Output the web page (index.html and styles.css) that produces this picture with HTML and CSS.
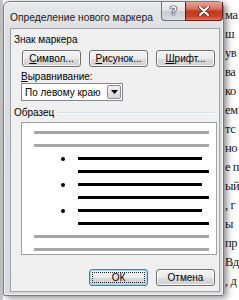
FILE: index.html
```html
<!DOCTYPE html>
<html lang="ru">
<head>
<meta charset="utf-8">
<link rel="stylesheet" href="styles.css">
</head>
<body>
<div class="doc">
  <div class="doc-line">ма</div>
  <div class="doc-line">ш</div>
  <div class="doc-line">ув</div>
  <div class="doc-line">ва</div>
  <div class="doc-line">ко</div>
  <div class="doc-line">ем</div>
  <div class="doc-line">тс</div>
  <div class="doc-line">но</div>
  <div class="doc-line">е п</div>
  <div class="doc-line">ый</div>
  <div class="doc-line">, г</div>
  <div class="doc-line">ы</div>
  <div class="doc-line">пр</div>
  <div class="doc-line">Вд</div>
  <div class="doc-line">, д</div>
</div>

<div class="window">
  <div class="titlebar">
    <span class="title">Определение нового маркера</span>
    <div class="caption-btns">
      <div class="cbtn help">?</div>
      <div class="cbtn close">
        <svg width="12" height="10" viewBox="0 0 12 10"><path d="M2 1 L10 9 M10 1 L2 9" stroke="#5a1a14" stroke-width="3.6" stroke-linecap="round"/><path d="M2 1 L10 9 M10 1 L2 9" stroke="#fff" stroke-width="2.2" stroke-linecap="round"/></svg>
      </div>
    </div>
  </div>
  <div class="client">
    <div class="group-title">Знак маркера</div>
    <div class="btn-row">
      <div class="btn"><u>С</u>имвол...</div>
      <div class="btn"><u>Р</u>исунок...</div>
      <div class="btn"><u>Ш</u>рифт...</div>
    </div>
    <div class="label"><u>В</u>ыравнивание:</div>
    <div class="combo">
      <span class="combo-text">По левому краю</span>
      <span class="combo-arrow"><svg width="7" height="4" viewBox="0 0 7 4"><path d="M0 0 H7 L3.5 4 Z" fill="#000"/></svg></span>
    </div>
    <div class="group-head"><span>Образец</span><span class="group-line"></span></div>
    <div class="preview">
      <div class="pline gray"></div>
      <div class="pline gray"></div>
      <div class="prow"><span class="dot"></span><span class="bl short"></span></div>
      <div class="prow"><span class="bl"></span></div>
      <div class="prow"><span class="dot"></span><span class="bl short"></span></div>
      <div class="prow"><span class="bl"></span></div>
      <div class="prow"><span class="dot"></span><span class="bl short"></span></div>
      <div class="prow"><span class="bl"></span></div>
      <div class="pline gray"></div>
      <div class="pline gray"></div>
    </div>
    <div class="footer">
      <div class="btn ok"><span class="focus">ОК</span></div>
      <div class="btn">Отмена</div>
    </div>
  </div>
</div>
</body>
</html>
```
FILE: styles.css
```css
* { box-sizing: border-box; }
html, body { margin: 0; padding: 0; }
body {
  width: 239px;
  height: 300px;
  overflow: hidden;
  background: #ffffff;
  position: relative;
  font-family: "Liberation Sans", "Noto Sans", sans-serif;
}
.doc {
  padding: 6px 0 0 225px;
  font-family: "Liberation Serif", serif;
  font-size: 12.5px;
  letter-spacing: -0.4px;
  line-height: 19px;
  color: #1a1a1a;
  background: linear-gradient(to right, #bfbfbf 0, #cfcfcf 3px, #fff 3px);
  height: 300px;
}
.doc-line { white-space: nowrap; }

.window {
  position: absolute;
  left: 3px;
  top: 1px;
  width: 221px;
  height: 295px;
  background: linear-gradient(to bottom, #e6e8ea 0, #dcdee1 30px, #d8dadd 100%);
  border: 1px solid #77797c;
  border-radius: 6px 6px 2px 2px;
  box-shadow: 3px 2px 6px rgba(0,0,0,0.45), inset 0 0 0 1px rgba(255,255,255,0.7);
  display: flex;
  flex-direction: column;
  padding: 0 3px 3px 6px;
}
.titlebar {
  height: 26px;
  flex-shrink: 0;
  display: flex;
  align-items: flex-start;
  justify-content: space-between;
}
.title {
  font-size: 10.3px;
  color: #1b1b1b;
  margin-top: 10px;
  white-space: nowrap;
}
.caption-btns {
  display: flex;
  flex-shrink: 0;
  height: 19px;
  margin-right: -3px;
}
.cbtn {
  height: 19px;
  display: flex;
  align-items: center;
  justify-content: center;
  border: 1px solid #6f7275;
  border-top: none;
}
.help {
  width: 24px;
  border-radius: 0 0 0 4px;
  background: linear-gradient(to bottom, #f1f3f5 0, #dfe2e6 50%, #c8ccd1 51%, #d9dce0 100%);
  color: #ffffff;
  font-weight: bold;
  font-size: 12px;
  line-height: 12px;
  text-shadow: 0 0 1px #222, 0 0 1px #222, 0 0 1px #222, 0 0 1px #222;
  border-right: none;
}
.close {
  width: 38px;
  border-radius: 0 0 4px 0;
  border-color: #5e2018;
  background: linear-gradient(to bottom, #e9a396 0, #d96d5b 40%, #c13a22 50%, #c7432b 80%, #db7661 100%);
}
.client {
  flex: 1;
  background: #f0f0f0;
  border: 1px solid #9ea2a6;
  padding: 4px 3px 4px 3px;
  display: flex;
  flex-direction: column;
  font-size: 10px;
  color: #000;
}
.group-title {
  line-height: 13px;
  height: 13px;
}
.btn-row {
  display: flex;
  gap: 8px;
  padding-left: 8px;
  margin-top: 4px;
}
.btn {
  width: 59px;
  height: 17px;
  border: 1px solid #707070;
  border-radius: 3px;
  background: linear-gradient(to bottom, #f2f2f2 0, #ebebeb 50%, #dddddd 51%, #cfcfcf 100%);
  box-shadow: inset 0 0 0 1px rgba(255,255,255,0.8);
  display: flex;
  align-items: center;
  justify-content: center;
  font-size: 10px;
  line-height: 12px;
  white-space: nowrap;
}
.btn u { text-decoration-thickness: 1px; text-underline-offset: 1px; }
.label {
  margin-top: 3px;
  padding-left: 7px;
  line-height: 13px;
  height: 13px;
}
.combo {
  margin-top: 0;
  margin-left: 7px;
  width: 102px;
  height: 18px;
  background: #fff;
  border: 1px solid #828790;
  display: flex;
  align-items: center;
  justify-content: space-between;
}
.combo-text { padding-left: 3px; white-space: nowrap; }
.combo-arrow {
  width: 14px;
  height: 14px;
  margin-right: 1px;
  border: 1px solid #8c8c8c;
  border-radius: 2px;
  background: linear-gradient(to bottom, #f2f2f2, #d6d6d6);
  display: flex;
  align-items: center;
  justify-content: center;
}
.group-head {
  margin-top: 5px;
  display: flex;
  align-items: center;
  gap: 3px;
  line-height: 13px;
  height: 13px;
}
.group-line {
  flex: 1;
  height: 2px;
  border-top: 1px solid #d5dfe5;
  border-bottom: 1px solid #fff;
}
.preview {
  margin-top: 3px;
  margin-left: 7px;
  width: 196px;
  height: 133px;
  flex-shrink: 0;
  background: #fff;
  border: 1px solid #a0a0a0;
  padding: 8px 0 0 12px;
  display: flex;
  flex-direction: column;
  gap: 10px;
}
.pline { height: 3px; width: 175px; flex-shrink: 0; }
.gray { background: #a6a6a6; }
.prow {
  height: 3px;
  flex-shrink: 0;
  position: relative;
  padding-left: 44px;
  display: flex;
  align-items: center;
}
.bl { display: block; height: 3px; width: 131px; background: #000; }
.bl.short { width: 124px; }
.dot {
  position: absolute;
  left: 27px;
  top: -0.5px;
  width: 4px;
  height: 4px;
  border-radius: 50%;
  background: #000;
}
.footer {
  margin-top: auto;
  display: flex;
  justify-content: flex-end;
  gap: 8px;
  padding-right: 1px;
  margin-bottom: 1px;
}
.ok {
  border-color: #3c7fb1;
  box-shadow: inset 0 0 0 1px #a7d6f0;
}
.focus {
  border: 1px dotted #222;
  width: 53px;
  height: 11px;
  display: flex;
  align-items: center;
  justify-content: center;
}
```
